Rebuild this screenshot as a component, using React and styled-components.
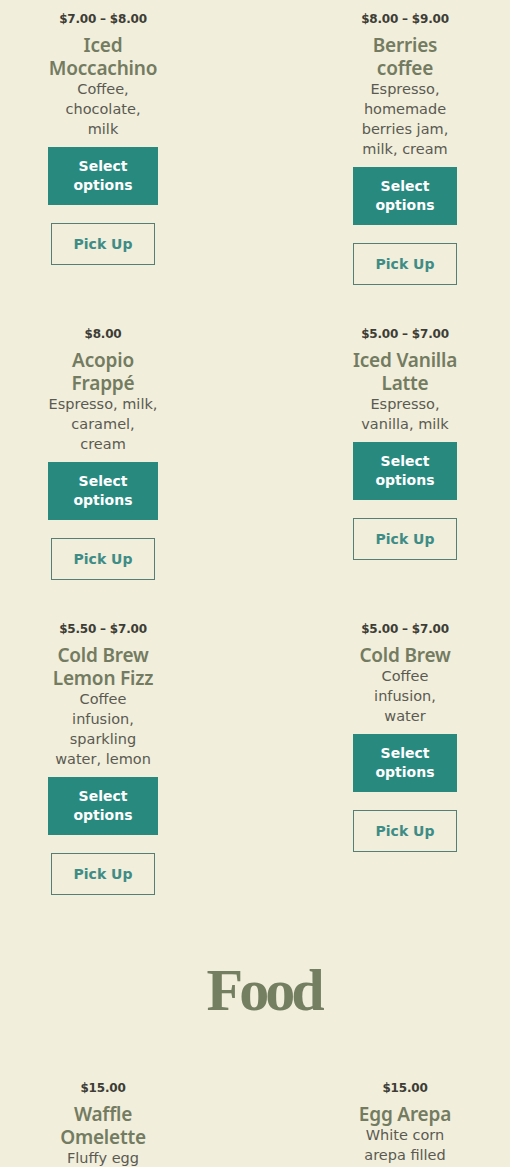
import React from "react";
import styled, { createGlobalStyle } from "styled-components";

const GlobalStyle = createGlobalStyle`
  html, body {
    margin: 0;
    padding: 0;
    background: #f1eedb;
  }
  body {
    font-family: "DejaVu Sans", "Noto Sans", sans-serif;
  }
`;

const Page = styled.div`
  display: flex;
  flex-direction: column;
  width: 510px;
  padding-top: 9px;
  padding-bottom: 40px;
`;

const Grid = styled.div`
  display: grid;
  grid-template-columns: 110px 104px;
  column-gap: 195px;
  row-gap: 39px;
  padding-left: 48px;
  align-items: start;
`;

const Item = styled.div`
  display: flex;
  flex-direction: column;
  align-items: center;
  text-align: center;
`;

const Price = styled.div`
  font-family: "DejaVu Sans", sans-serif;
  font-size: 12px;
  font-weight: 700;
  line-height: 21px;
  color: #3d3d36;
  letter-spacing: -0.2px;
`;

const Title = styled.h3`
  margin: 4px -3px 0;
  font-family: "Noto Sans", sans-serif;
  font-size: 19px;
  font-weight: 600;
  line-height: 23px;
  color: #737b61;
  letter-spacing: -0.2px;
`;

const Desc = styled.p`
  margin: -1px 0 0;
  font-family: "DejaVu Sans", sans-serif;
  font-size: 14.5px;
  line-height: 20px;
  color: #5a5a52;
`;

const SelectBtn = styled.a`
  display: block;
  box-sizing: border-box;
  width: 100%;
  margin-top: 8px;
  padding: 10px 8px;
  background: #288a7f;
  color: #fff;
  font-family: "DejaVu Sans", sans-serif;
  font-size: 14px;
  font-weight: 700;
  line-height: 19px;
  text-decoration: none;
`;

const PickBtn = styled.a`
  display: flex;
  box-sizing: border-box;
  width: 104px;
  height: 42px;
  margin-top: 18px;
  align-items: center;
  justify-content: center;
  border: 1px solid #557f75;
  color: #3e8c86;
  font-family: "DejaVu Sans", sans-serif;
  font-size: 14px;
  font-weight: 700;
  text-decoration: none;
`;

const Heading = styled.h2`
  margin: 62px 0 54px;
  padding-left: 17px;
  font-family: "Liberation Serif", "DejaVu Serif", serif;
  font-size: 60px;
  font-weight: 700;
  line-height: 67px;
  letter-spacing: -4px;
  text-align: center;
  color: #747e60;
`;

const drinks = [
  { price: "$7.00 – $8.00", title: "Iced Moccachino", desc: "Coffee, chocolate, milk" },
  { price: "$8.00 – $9.00", title: "Berries coffee", desc: "Espresso, homemade berries jam, milk, cream" },
  { price: "$8.00", title: "Acopio Frappé", desc: "Espresso, milk, caramel, cream" },
  { price: "$5.00 – $7.00", title: "Iced Vanilla Latte", desc: "Espresso, vanilla, milk" },
  { price: "$5.50 – $7.00", title: "Cold Brew Lemon Fizz", desc: "Coffee infusion, sparkling water, lemon" },
  { price: "$5.00 – $7.00", title: "Cold Brew", desc: "Coffee infusion, water" },
];

const food = [
  { price: "$15.00", title: "Waffle Omelette", desc: "Fluffy egg" },
  { price: "$15.00", title: "Egg Arepa", desc: "White corn arepa filled" },
];

function Product({ price, title, desc, buttons }) {
  return (
    <Item>
      <Price>{price}</Price>
      <Title>{title}</Title>
      <Desc>{desc}</Desc>
      {buttons && (
        <>
          <SelectBtn href="#">Select options</SelectBtn>
          <PickBtn href="#">Pick Up</PickBtn>
        </>
      )}
    </Item>
  );
}

export default function App() {
  return (
    <>
      <GlobalStyle />
      <Page>
        <Grid>
          {drinks.map((d) => (
            <Product key={d.title} {...d} buttons />
          ))}
        </Grid>
        <Heading>Food</Heading>
        <Grid>
          {food.map((d) => (
            <Product key={d.title} {...d} />
          ))}
        </Grid>
      </Page>
    </>
  );
}
